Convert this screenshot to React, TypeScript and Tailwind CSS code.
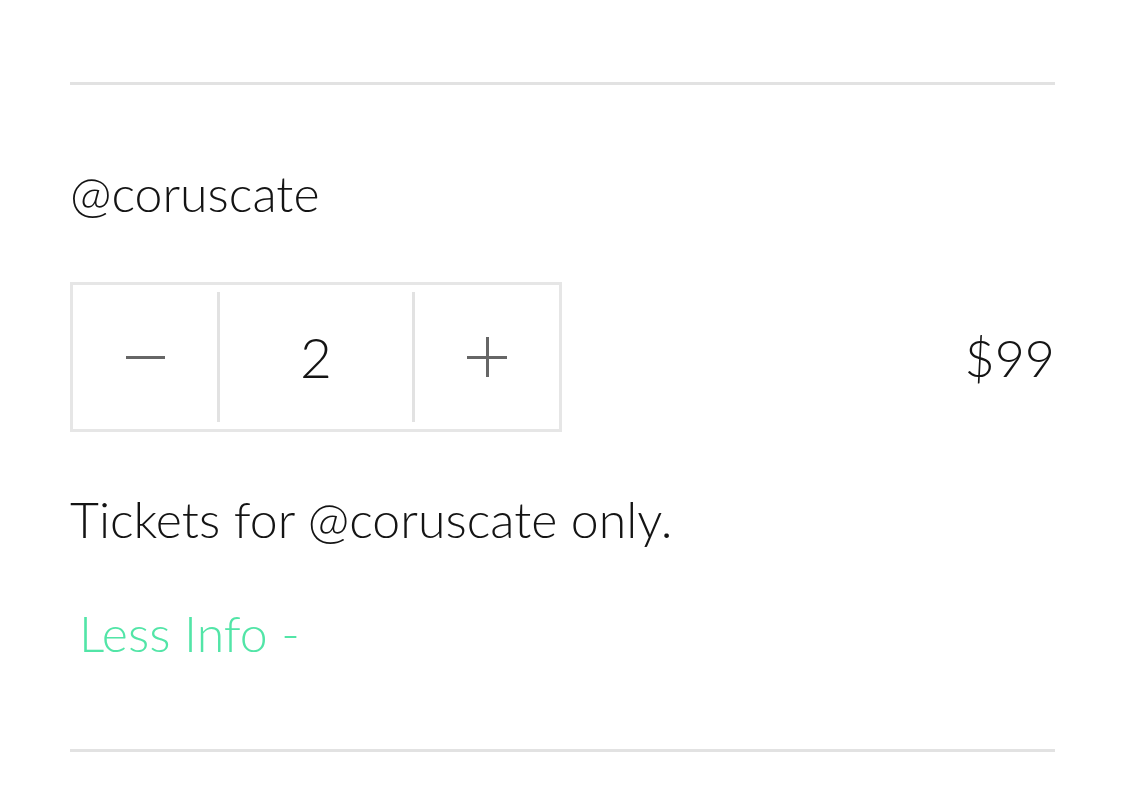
export default function App() {
  return (
    <div className="min-h-screen bg-white px-[70px] pt-[82px] font-['Lato',sans-serif] font-light text-[#141414]">
      <div className="h-[3px] w-[985px] bg-[#e2e2e2]" />
      <div className="mt-[80px] text-[50px] leading-[56px]">@coruscate</div>
      <div className="mt-[61px] flex items-center justify-between">
        <div className="flex h-[150px] w-[492px] items-center border-[3px] border-[#e6e6e6]">
          <button className="flex h-full w-[144px] items-center justify-center">
            <span className="block h-[3px] w-[39px] bg-[#666]" />
          </button>
          <div className="h-[130px] w-[3px] bg-[#e2e2e2]" />
          <div className="flex h-full flex-1 items-center justify-center text-[55px] leading-none">2</div>
          <div className="h-[130px] w-[3px] bg-[#e2e2e2]" />
          <button className="relative flex h-full w-[144px] items-center justify-center">
            <span className="block h-[3px] w-[40px] bg-[#666]" />
            <span className="absolute h-[40px] w-[3px] bg-[#666]" />
          </button>
        </div>
        <div className="text-[52px] leading-none">$99</div>
      </div>
      <p className="mt-[59px] text-[50px] leading-[56px]">Tickets for @coruscate only.</p>
      <button className="mt-[58px] block pl-[9px] text-[50px] leading-[56px] text-[#52e5a7]">Less Info -</button>
      <div className="mt-[88px] h-[3px] w-[985px] bg-[#e2e2e2]" />
    </div>
  );
}
